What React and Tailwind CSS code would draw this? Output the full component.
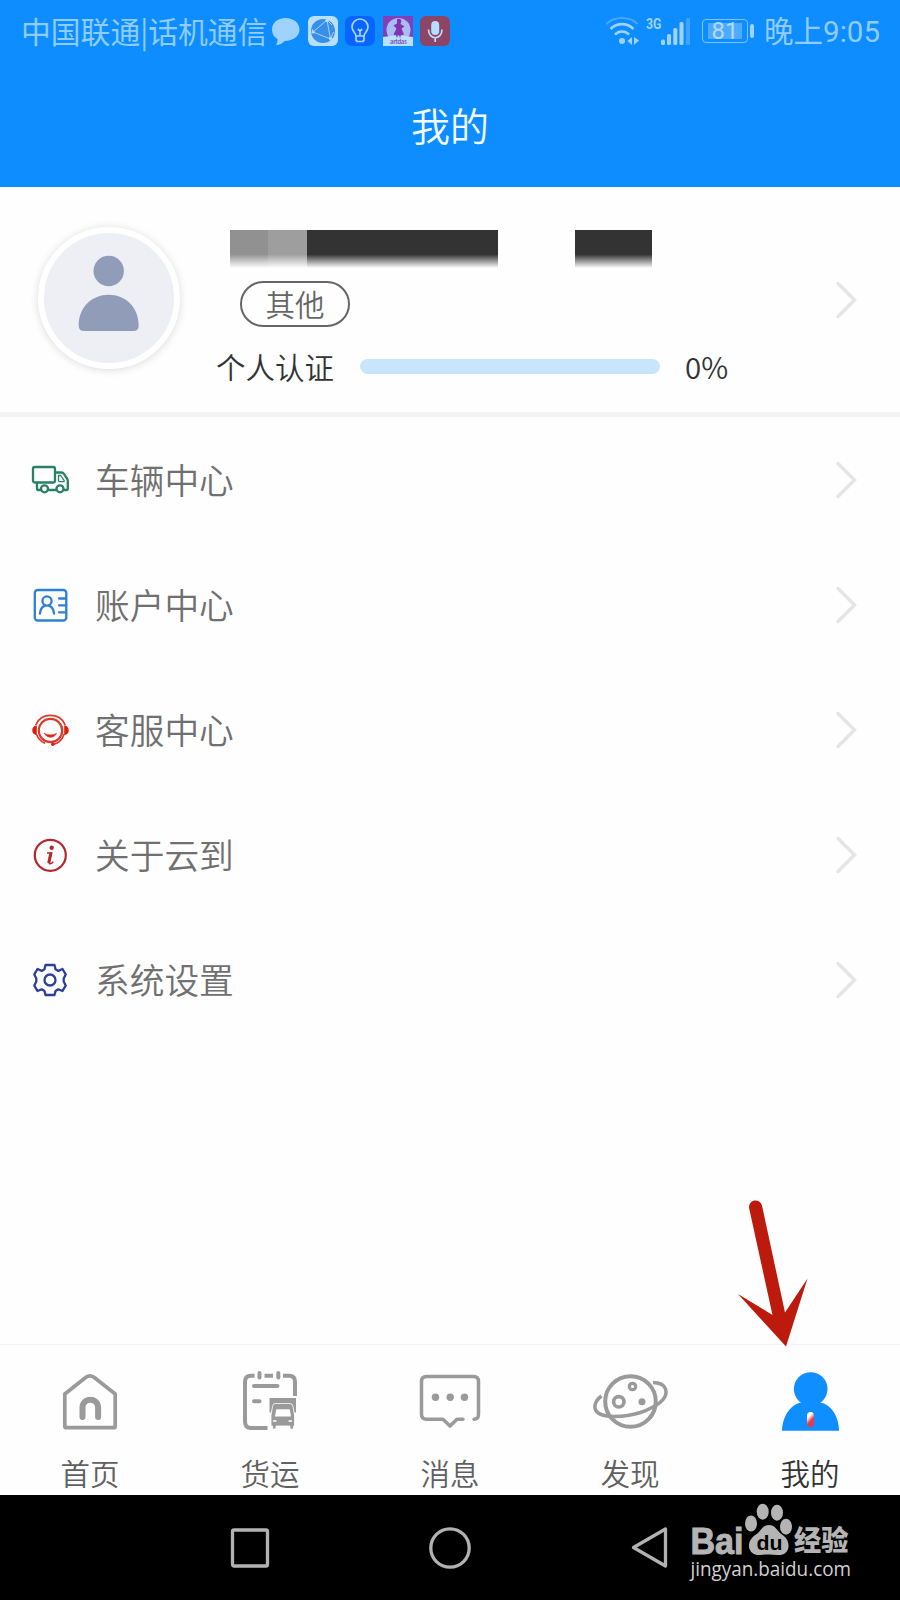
const menuItems = [
    { label: "车辆中心", icon: TruckIcon },
    { label: "账户中心", icon: AccountIcon },
    { label: "客服中心", icon: ServiceIcon },
    { label: "关于云到", icon: InfoIcon },
    { label: "系统设置", icon: SettingsIcon },
];

const tabs = [
    { label: "首页", icon: HomeIcon },
    { label: "货运", icon: FreightIcon },
    { label: "消息", icon: MessageIcon },
    { label: "发现", icon: PlanetIcon },
    { label: "我的", icon: MineIcon, active: true },
];

/* menu icons, all on a 40x40 grid */

function TruckIcon() {
    return (
        <svg className="size-10" viewBox="0 0 40 40" fill="none" stroke="#2b7f66" strokeWidth="2.300" strokeLinecap="round" strokeLinejoin="round">
            <rect x="3" y="7" width="22" height="15.500" rx="2" />
            <path d="M25 12.500h6.500q1.500 0 2.300 1.200l3.200 4.800q.8 1.200.8 2.500v7.500q0 1.500-1.500 1.500H34M26 30h-7.500M10.500 30H8.500q-1.500 0-1.500-1.500V23" />
            <path d="M28.500 15.500h2.200l3.500 5.200q.3 1-.8 1h-3.500q-1.400 0-1.400-1.300z" strokeWidth="1.300" />
            <circle cx="14.500" cy="28.800" r="3.500" />
            <circle cx="30" cy="28.800" r="3.500" />
        </svg>
    );
}

function AccountIcon() {
    return (
        <svg className="size-10" viewBox="0 0 40 40" fill="none" stroke="#2f7fd6" strokeWidth="2.300" strokeLinecap="round">
            <rect x="4.800" y="5" width="31.500" height="30.500" rx="3" />
            <circle cx="17" cy="16" r="4.600" />
            <path d="M10 28.500c.3-4.500 3-7.200 5-7.900M24 28.500c-.3-4.500-3-7.200-5-7.900" />
            <path d="M29 13.500h7M29 20.300h7M29 27.300h7" />
        </svg>
    );
}

function ServiceIcon() {
    return (
        <svg className="size-10" viewBox="0 0 40 40" fill="none" stroke="#d93a2b" strokeWidth="1.700" strokeLinecap="round">
            <path d="M6 14.500C8.500 8.500 14 5.300 20.500 5.300S32.500 8.500 35 14.500" />
            <circle cx="20.500" cy="20.500" r="11.700" strokeWidth="2.200" />
            <path d="M6.800 15.500v9.500c-3 .2-4.600-2-4.600-4.700s1.600-4.800 4.600-4.800zM34.200 15.500v9.500c3 .2 4.600-2 4.600-4.700s-1.600-4.800-4.600-4.800z" fill="#d9200f" stroke="none" />
            <path d="M14.500 23.500q6 3 12 0c-2.500 5-9.500 5-12 0z" fill="#d9200f" strokeWidth=".8" />
            <path d="M34 24.500C32 30 28 33.700 23 34.300" />
            <path d="M6.800 25c1.500 3.600 4 6.300 7.700 8" />
            <circle cx="22.800" cy="34.200" r="1.700" fill="#d9200f" stroke="none" />
        </svg>
    );
}

function InfoIcon() {
    return (
        <svg className="size-10" viewBox="0 0 40 40" fill="none" stroke="#b3272d" strokeWidth="2.200">
            <circle cx="20.300" cy="20.300" r="15.500" />
            <circle cx="21.700" cy="12.700" r="2.200" fill="#b3272d" stroke="none" />
            <path d="M17 18h4.500l-2.200 9.500q-.2 1.300 1 1.200 1.500-.2 3-2" strokeWidth="1.500" />
            <path d="M21 17.500l-2.300 10.500" strokeWidth="3" />
        </svg>
    );
}

function SettingsIcon() {
    return (
        <svg className="size-10" viewBox="0 0 40 40" fill="none" stroke="#2b3f9a" strokeWidth="2.300" strokeLinejoin="round">
            <path d="M15.500 5h9l1 4.200 2.800 1.700 4.200-1.900 3.200 5.400-2 4v3.200l2 4-3.200 5.400-4.200-1.700-2.800 1.700-1 4h-9l-1-4-2.800-1.700L7.500 31l-3.200-5.400 2-4v-3.200l-2-4L7.500 9l4.200 1.900 2.800-1.700z" />
            <circle cx="20" cy="20" r="5.500" />
        </svg>
    );
}

/* tab bar icons, 80x64 grid */

function HomeIcon() {
    return (
        <svg className="h-16 w-20" viewBox="0 0 80 64" fill="none" stroke="#9a9a9a" strokeLinejoin="round" strokeLinecap="round">
            <path d="M14.800 25L36 8.300q4-3 8 0l21.200 16.700V57.200q0 1.500-1.500 1.500H16.300q-1.500 0-1.500-1.500z" strokeWidth="3.700" />
            <path d="M32.500 48V38.500a7.800 7.800 0 0 1 15.600 0V48" strokeWidth="6" />
        </svg>
    );
}

function FreightIcon() {
    return (
        <svg className="h-16 w-20" viewBox="0 0 80 64" fill="none" stroke="#9a9a9a" strokeWidth="4">
            <path d="M24.500 6.800H21q-6 0-6 6V52.500q0 6.500 6 6.500h16.500M34.500 6.800h8.500M53 6.800h6q6 0 6 6V27" />
            <path d="M29.500 4v4.500M48.300 4v4.500M24 17h23.500M24 32.300h5.500" strokeLinecap="round" />
            <path d="M39.500 29H66v14.500h-2L62 35H43.500l-2.500 8.500h-1.500z" fill="#9a9a9a" stroke="none" />
            <path d="M45 34.500h15q2.500 0 3 3l1.500 9v10.500h-1v3h-3.500v-3H46v3h-3.500v-3h-1.500V46.500l1.500-9q.5-3 2.500-3z" fill="#9a9a9a" stroke="#fefefe" strokeWidth=".8" />
            <path d="M46.300 40.300h13.400l1.300 7.200H45z" fill="#fefefe" stroke="none" />
            <path d="M43 52h3.500M58.500 52h3.500" stroke="#fefefe" strokeWidth="1.600" />
        </svg>
    );
}

function MessageIcon() {
    return (
        <svg className="h-16 w-20" viewBox="0 0 80 64" fill="none" stroke="#9a9a9a" strokeWidth="3.500" strokeLinecap="round" strokeLinejoin="round">
            <path d="M53 50.200h-6L40 57l-7-6.800H16.500q-5 0-5-5V12.500q0-5 5-5h47q5 0 5 5v32.700q0 5-4.500 5" />
            <g fill="#9a9a9a" stroke="none">
                <circle cx="25.500" cy="28.300" r="3.700" />
                <circle cx="40.200" cy="28.300" r="3.700" />
                <circle cx="54.500" cy="28.300" r="3.700" />
            </g>
        </svg>
    );
}

function PlanetIcon() {
    return (
        <svg className="h-16 w-20" viewBox="0 0 80 64" fill="none" stroke="#9a9a9a" strokeWidth="3.500">
            <circle cx="40.500" cy="32.500" r="25.300" strokeWidth="4" />
            <circle cx="28.800" cy="32.800" r="5.200" strokeWidth="3.700" />
            <circle cx="42.500" cy="17.500" r="3.200" strokeWidth="3.200" />
            <circle cx="52" cy="32.800" r="3.500" fill="#9a9a9a" stroke="none" />
            <path d="M11.500 27C4.500 32 3.500 39 6.500 42.500c5 6 24 7 44 1C68 37 78.500 29 75.500 20c-1.500-4.500-6-6.300-12.500-6.500" />
        </svg>
    );
}

function MineIcon() {
    return (
        <svg className="h-16 w-20" viewBox="0 0 80 64">
            <defs>
                <linearGradient id="tie" x1="0" y1="0" x2=".5" y2="1">
                    <stop offset=".35" stopColor="#fff" />
                    <stop offset=".7" stopColor="#e53950" />
                </linearGradient>
            </defs>
            <circle cx="40.700" cy="20" r="16.800" fill="#0f8eff" />
            <path d="M12 61.700C12 47 22 33.500 33 33.500h15C60 33.500 69 47 69 61.700z" fill="#0f8eff" />
            <rect x="37" y="43" width="7" height="15" rx="3.500" fill="url(#tie)" />
        </svg>
    );
}

function StatusBar() {
    return (
        <div className="flex h-[61px] items-center justify-between pl-[21px] pr-5 text-[29.800px] text-[#8fccff]">
            <div className="flex items-center">
                <span className="-mt-px whitespace-nowrap">中国联通|话机通信</span>
                <div className="ml-1 flex items-center gap-[7.500px]">
                    <svg className="h-[30px] w-[29px]" viewBox="0 0 29 30" fill="#9fd2ff">
                        <path d="M14.500 2C6.500 2 1 7 1 13.500c0 4.500 2 7.500 5.500 9.500 0 3-.5 4.500-1.500 6 4 0 7-2 8.500-4C22.500 25 28.500 20 28.500 13.500S22.500 2 14.500 2z" />
                    </svg>
                    <svg className="size-[30px]" viewBox="0 0 30 30">
                        <rect width="30" height="30" rx="6" fill="#b9dfff" />
                        <circle cx="15" cy="15" r="12" fill="#388fea" />
                        <path d="M5 16L19 4l3.500 19L5 16l-1-3M22.500 23l3-7M19 4l5 5" fill="none" stroke="#a5d3fb" strokeWidth="1" />
                        <circle cx="5" cy="16" r="1.600" fill="#b9dfff" />
                        <circle cx="19" cy="4.500" r="1.600" fill="#b9dfff" />
                        <circle cx="22.500" cy="22.500" r="1.600" fill="#b9dfff" />
                    </svg>
                    <svg className="size-[30px]" viewBox="0 0 30 30" fill="none" stroke="#a9d4ff" strokeWidth="1.700" strokeLinecap="round">
                        <rect width="30" height="30" rx="7" fill="#0866ff" stroke="none" />
                        <path d="M11 20c0-3-4-4.500-4-9a8 8 0 0 1 16 0c0 4.500-4 6-4 9zM11 20v3.500q0 2 2 2h4q2 0 2-2V20M15 20v-5M13.300 13.500L15 15l1.700-1.500" />
                    </svg>
                    <svg className="size-[30px]" viewBox="0 0 30 30">
                        <rect width="30" height="30" fill="#8240b8" />
                        <circle cx="15.500" cy="14" r="12" fill="#a9bdf4" />
                        <path d="M0 21q15-3 30 0v9H0z" fill="#bcdfff" />
                        <path d="M14 3q4-1 4.500 2L17.500 8l4 2.500-3 2 2.500 6-3.500 1v2h-1v-2h-2v2h-1v-2l-3-1 3-6-3-3 3.500-2z" fill="#8034ae" />
                        <text x="15.500" y="28" fontSize="6" fontWeight="700" textAnchor="middle" textLength="17" fill="#8058b8">artdas</text>
                    </svg>
                    <svg className="size-[30px]" viewBox="0 0 30 30">
                        <rect width="30" height="30" rx="6" fill="#8d4566" />
                        <rect x="11.200" y="5" width="8" height="14" rx="4" fill="#b8ddff" />
                        <path d="M8.500 13.500c0 11 13.500 11 13.500 0M15.200 22v4" fill="none" stroke="#b8ddff" strokeWidth="1.700" />
                    </svg>
                </div>
            </div>

            <div className="flex items-center">
                <svg className="h-[30px] w-[35px]" viewBox="0 0 35 30" fill="none" stroke="#9ed3ff" strokeWidth="2.600">
                    <path d="M1.500 8C9 0 25 0 32.500 8" stroke="#48a8ff" strokeWidth="2" />
                    <path d="M5.500 13C12 6.500 22 6.500 28.500 13M10 18.500c4-4 10-4 14 0" />
                    <circle cx="17" cy="25" r="3" fill="#9ed3ff" stroke="none" />
                    <path d="M27 21v8l-4.500-4zM29 21v8l5-4.500z" fill="#9ed3ff" stroke="none" />
                </svg>
                <svg className="ml-[6px] h-[30px] w-[46px]" viewBox="0 0 46 30" fill="#9ed3ff">
                    <text x="0" y="12.500" fontSize="15.500" fontWeight="700" textLength="15.500" lengthAdjust="spacingAndGlyphs" fontFamily="Roboto, sans-serif">3G</text>
                    <rect x="15" y="23.500" width="4" height="5.500" rx="1.500" />
                    <rect x="21" y="18" width="4" height="11" rx="1.500" />
                    <rect x="27.300" y="12" width="4" height="17" rx="1.500" />
                    <rect x="33.500" y="6" width="4" height="23" rx="1.500" />
                    <rect x="40" y="2" width="4" height="27" rx="1.500" fill="#3fa4ff" />
                </svg>
                <div className="ml-[10px] flex h-6 w-[46px] items-center justify-center rounded border-[1.500px] border-[#7fc3ff] p-[3px]">
                    <div className="flex h-full w-[34px] items-center justify-center bg-[#4eabff] font-['Roboto',sans-serif] text-[24px] leading-none text-[#b0dbff]">81</div>
                </div>
                <div className="ml-[2px] h-3.5 w-1 rounded-sm bg-[#9ed3ff]" />
                <span className="mt-[3px] ml-2.5 whitespace-nowrap font-['Roboto','Noto_Sans_CJK_SC',sans-serif] text-[29.500px]">晚上9:05</span>
            </div>
        </div>
    );
}

function Profile() {
    return (
        <div className="flex h-[230px] items-start border-b-[5px] border-[#f3f3f3]">
            <div className="ml-[38px] mt-10 flex size-[142px] shrink-0 items-center justify-center rounded-full border-[6px] border-white bg-[#eeeff4] shadow-[0_1px_8px_rgba(0,0,0,0.14)]">
                <svg className="size-[130px]" viewBox="0 0 130 130" fill="#919db8">
                    <circle cx="64.700" cy="38" r="15.200" />
                    <path d="M34.700 92.500C34.700 74 48 61.700 64.700 61.700S94.700 74 94.700 92.500q0 5.500-5.500 5.500h-49q-5.500 0-5.500-5.500z" />
                </svg>
            </div>

            <div className="ml-9 mt-[43px] w-[560px]">
                {/* masked name */}
                <div className="ml-[14px] flex h-[38px] [mask-image:linear-gradient(#000_64%,transparent)]">
                    <div className="w-[38px] bg-[#919191]" />
                    <div className="w-[39px] bg-[#9e9e9e]" />
                    <div className="w-[191px] bg-[#333]" />
                    <div className="ml-[77px] w-[77px] bg-[#333]" />
                </div>
                <div className="ml-6 mt-[13px] flex h-[46px] w-[110px] items-center justify-center rounded-full border-2 border-[#666] text-[29.500px] font-[350] leading-none text-[#666]">
                    其他
                </div>
                <div className="mt-[17px] flex h-11 items-center text-[29.500px] font-[350] leading-none text-[#333]">
                    <span className="mt-0.5 w-[118px] whitespace-nowrap">个人认证</span>
                    <div className="ml-[26px] h-[15px] w-[300px] rounded-full bg-[#c9e5fd]" />
                    <span className="ml-[25px] mt-0.5">0%</span>
                </div>
            </div>
            <Chevron className="mt-[89px]" />
        </div>
    );
}

function Chevron({ className = "" }) {
    return (
        <svg className={`ml-auto mr-[42px] h-12 w-6 shrink-0 ${className}`} viewBox="0 0 24 48" fill="none" stroke="#e5e5e5" strokeWidth="3.500" strokeLinecap="round">
            <path d="M4 7.500L20.500 24 4 40.500" />
        </svg>
    );
}

function Watermark() {
    return (
        <svg className="absolute left-[685px] top-[1500px] h-[85px] w-[175px]" viewBox="0 0 175 85" fill="#b4b4b4">
            <text x="5.500" y="53.500" fontSize="36" fontWeight="700" textLength="53" lengthAdjust="spacingAndGlyphs" fontFamily="Liberation Sans, sans-serif" stroke="#b4b4b4" strokeWidth="1">Bai</text>
            <ellipse cx="66" cy="23.500" rx="6" ry="8" />
            <ellipse cx="77.700" cy="11.700" rx="6" ry="8" />
            <ellipse cx="92" cy="12.700" rx="6" ry="8" />
            <ellipse cx="101" cy="26.700" rx="6" ry="8" />
            <path d="M84 25c6 0 8 5 11 8 6 4 9 8 8.500 14-1 6-5 8.500-11 8-6-.8-11-.8-17 0-6 .5-10.500-2-11.500-8-.5-6 3-10 9-14 3-3 5-8 11-8z" />
            <text x="71.500" y="50" fontSize="21" fontWeight="700" fill="#000" textLength="26" lengthAdjust="spacingAndGlyphs" fontFamily="Liberation Sans, sans-serif">du</text>
            <text x="109" y="51" fontSize="28" fontWeight="900" textLength="54.500" lengthAdjust="spacingAndGlyphs">经验</text>
            <text x="5.500" y="76" fontSize="20" fill="#d0d0d0" textLength="160.500" lengthAdjust="spacingAndGlyphs" fontFamily="Open Sans, sans-serif">jingyan.baidu.com</text>
        </svg>
    );
}

const App = () => {
    return (
        <div className="relative flex h-[1600px] w-[900px] flex-col overflow-hidden bg-[#fefefe] font-['Noto_Sans_CJK_SC',sans-serif]">
            <header className="h-[187px] bg-[#0d8dff]">
                <StatusBar />
                <h1 className="mt-[34px] text-center text-[39px] font-[350] leading-[58px] text-[#f4fcff]">我的</h1>
            </header>

            <Profile />

            <ul>
                {menuItems.map(({ label, icon: Icon }) => (
                    <li key={label} className="flex h-[125px] items-center pl-[30px]">
                        <Icon />
                        <span className="ml-[25px] text-[34.700px] font-[350] leading-none text-[#707070]">{label}</span>
                        <Chevron />
                    </li>
                ))}
            </ul>

            <nav className="mt-auto flex h-[151px] shrink-0 border-t border-[#f3f3f3]">
                {tabs.map(({ label, icon: Icon, active }) => (
                    <div key={label} className="flex w-[180px] flex-col items-center pt-6">
                        <Icon />
                        <span className={`mt-[25px] text-[29.500px] font-[350] leading-none ${active ? "text-[#333]" : "text-[#606060]"}`}>{label}</span>
                    </div>
                ))}
            </nav>

            <div className="flex h-[105px] shrink-0 items-center justify-center gap-[158px] bg-black">
                <svg className="size-10" viewBox="0 0 40 40" fill="none" stroke="#b2b2b2" strokeWidth="3.300">
                    <rect x="2.500" y="2" width="35" height="36" rx="1.500" />
                </svg>
                <svg className="size-11" viewBox="0 0 44 44" fill="none" stroke="#b2b2b2" strokeWidth="3.300">
                    <circle cx="22" cy="22" r="19.200" />
                </svg>
                <svg className="h-11 w-10" viewBox="0 0 40 44" fill="none" stroke="#b2b2b2" strokeWidth="3.300" strokeLinejoin="round">
                    <path d="M35.500 3v37L3.500 21.500z" />
                </svg>
            </div>

            <Watermark />

            {/* pointer to the active tab */}
            <svg className="absolute left-[730px] top-[1195px] h-[160px] w-[90px]" viewBox="0 0 90 160" fill="#bb1a0c">
                <path d="M19.200 13.500A6.500 6.500 0 0 1 32 10.500L55 117.500 77.500 83.500 56 151.500 8 99 42.500 120z" />
            </svg>
        </div>
    );
};

export default App;
